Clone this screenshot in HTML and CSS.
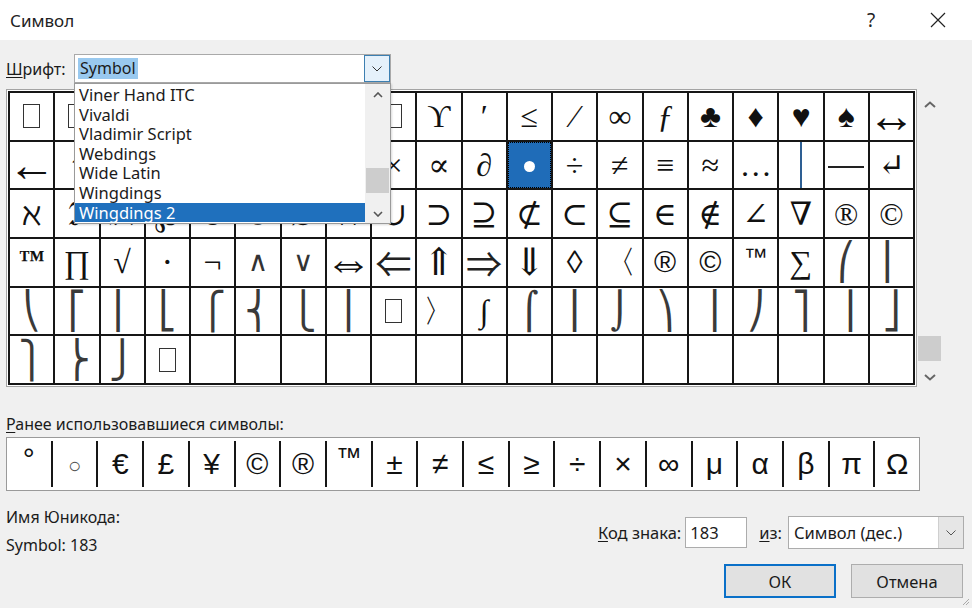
FILE: index.html
```html
<!DOCTYPE html>
<html lang="ru">
<head>
<meta charset="utf-8">
<title>Символ</title>
<link rel="stylesheet" href="styles.css">
</head>
<body>
<div class="titlebar">
  <div class="title">Символ</div>
  <div class="tb-btn help">?</div>
  <div class="tb-btn close">
    <svg width="16" height="16" viewBox="0 0 16 16"><path d="M1 1 L15 15 M15 1 L1 15" stroke="#222" stroke-width="1.2" fill="none"/></svg>
  </div>
</div>

<div class="main">
  <div class="font-row">
    <div class="label"><u>Ш</u>рифт:</div>
    <div class="combo">
      <div class="combo-text"><span class="sel">Symbol</span></div>
      <div class="combo-btn">
        <svg width="10" height="6" viewBox="0 0 10 6"><path d="M0.5 0.5 L5 5 L9.5 0.5" stroke="#333" stroke-width="1" fill="none"/></svg>
      </div>
      <div class="droplist">
        <div class="items">
          <div class="item">Viner Hand ITC</div>
          <div class="item">Vivaldi</div>
          <div class="item">Vladimir Script</div>
          <div class="item">Webdings</div>
          <div class="item">Wide Latin</div>
          <div class="item">Wingdings</div>
          <div class="item active">Wingdings 2</div>
        </div>
        <div class="vscroll small">
          <svg class="arr" width="10" height="6" viewBox="0 0 10 6"><path d="M1 5 L5 1 L9 5" stroke="#555" stroke-width="1.6" fill="none"/></svg>
          <div class="track"><div class="thumb"></div></div>
          <svg class="arr" width="10" height="6" viewBox="0 0 10 6"><path d="M1 1 L5 5 L9 1" stroke="#555" stroke-width="1.6" fill="none"/></svg>
        </div>
      </div>
    </div>
  </div>

  <div class="grid-row">
    <div class="grid-frame">
      <div class="grid">
        <div class="c"><span class="nb"></span></div><div class="c"><span class="nb"></span></div><div class="c"><span class="nb"></span></div><div class="c"><span class="nb"></span></div><div class="c"><span class="nb"></span></div><div class="c"><span class="nb"></span></div><div class="c"><span class="nb"></span></div><div class="c"><span class="nb"></span></div><div class="c"><span class="nb"></span></div><div class="c">ϒ</div><div class="c">′</div><div class="c">≤</div><div class="c">⁄</div><div class="c">∞</div><div class="c it">ƒ</div><div class="c">♣</div><div class="c">♦</div><div class="c">♥</div><div class="c">♠</div><div class="c harr">↔</div>

        <div class="c harr">←</div><div class="c varr">↑</div><div class="c harr">→</div><div class="c varr">↓</div><div class="c">°</div><div class="c">±</div><div class="c">″</div><div class="c">≥</div><div class="c">×</div><div class="c">∝</div><div class="c">∂</div><div class="c selected"><span class="dot"></span></div><div class="c">÷</div><div class="c">≠</div><div class="c">≡</div><div class="c">≈</div><div class="c">…</div><div class="c"><span class="vline"></span></div><div class="c"><span class="hline"></span></div><div class="c">↵</div>

        <div class="c">ℵ</div><div class="c">ℑ</div><div class="c">ℜ</div><div class="c">℘</div><div class="c">⊗</div><div class="c">⊕</div><div class="c">∅</div><div class="c">∩</div><div class="c">∪</div><div class="c">⊃</div><div class="c">⊇</div><div class="c">⊄</div><div class="c">⊂</div><div class="c">⊆</div><div class="c">∈</div><div class="c">∉</div><div class="c">∠</div><div class="c">∇</div><div class="c">®</div><div class="c">©</div>

        <div class="c tm">™</div><div class="c">∏</div><div class="c">√</div><div class="c">⋅</div><div class="c">¬</div><div class="c thin">∧</div><div class="c thin">∨</div><div class="c harr">⇔</div><div class="c dbl">⇐</div><div class="c varr">⇑</div><div class="c dbl">⇒</div><div class="c varr">⇓</div><div class="c">◊</div><div class="c">〈</div><div class="c sans">®</div><div class="c sans">©</div><div class="c sans tm2">™</div><div class="c">∑</div><div class="c ext">⎛</div><div class="c ext">⎜</div>

        <div class="c ext">⎝</div><div class="c ext">⎡</div><div class="c ext">⎢</div><div class="c ext">⎣</div><div class="c ext">⎧</div><div class="c ext">⎨</div><div class="c ext">⎩</div><div class="c ext">⎪</div><div class="c"><span class="nb"></span></div><div class="c">〉</div><div class="c">∫</div><div class="c ext">⌠</div><div class="c ext">⎮</div><div class="c ext">⌡</div><div class="c ext">⎞</div><div class="c ext">⎟</div><div class="c ext">⎠</div><div class="c ext">⎤</div><div class="c ext">⎥</div><div class="c ext">⎦</div>

        <div class="c ext">⎫</div><div class="c ext">⎬</div><div class="c ext">⎭</div><div class="c"><span class="nb"></span></div><div class="c"></div><div class="c"></div><div class="c"></div><div class="c"></div><div class="c"></div><div class="c"></div><div class="c"></div><div class="c"></div><div class="c"></div><div class="c"></div><div class="c"></div><div class="c"></div><div class="c"></div><div class="c"></div><div class="c"></div><div class="c"></div>
      </div>
    </div>
    <div class="vscroll big">
      <svg class="arr" width="12" height="7" viewBox="0 0 12 7"><path d="M1 6 L6 1.5 L11 6" stroke="#666" stroke-width="2" fill="none"/></svg>
      <div class="track"><div class="thumb"></div></div>
      <svg class="arr" width="12" height="7" viewBox="0 0 12 7"><path d="M1 1 L6 5.5 L11 1" stroke="#666" stroke-width="2" fill="none"/></svg>
    </div>
  </div>

  <div class="recent-label"><u>Р</u>анее использовавшиеся символы:</div>
  <div class="recent">
    <div class="r sup">°</div><div class="r small">○</div><div class="r">€</div><div class="r">£</div><div class="r">¥</div><div class="r">©</div><div class="r">®</div><div class="r sup2">™</div><div class="r">±</div><div class="r">≠</div><div class="r">≤</div><div class="r">≥</div><div class="r">÷</div><div class="r">×</div><div class="r">∞</div><div class="r">μ</div><div class="r">α</div><div class="r">β</div><div class="r">π</div><div class="r">Ω</div>
  </div>

  <div class="bottom">
    <div class="info">
      <div class="info-line">Имя Юникода:</div>
      <div class="info-line second">Symbol: 183</div>
    </div>
    <div class="controls">
      <div class="code-row">
        <span class="lbl"><u>К</u>од знака:</span>
        <div class="input">183</div>
        <span class="lbl from"><u>и</u>з:</span>
        <div class="select">
          <div class="select-text">Символ (дес.)</div>
          <div class="select-btn">
            <svg width="10" height="6" viewBox="0 0 10 6"><path d="M0.5 0.5 L5 5 L9.5 0.5" stroke="#555" stroke-width="1" fill="none"/></svg>
          </div>
        </div>
      </div>
      <div class="btn-row">
        <div class="btn ok">ОК</div>
        <div class="btn">Отмена</div>
      </div>
    </div>
  </div>
</div>
<svg class="grip" width="8" height="8" viewBox="0 0 8 8"><path d="M7 1 L1 7 M7 4 L4 7" stroke="#aaa" stroke-width="1"/></svg>
</body>
</html>
```
FILE: styles.css
```css
* { box-sizing: border-box; }
html, body { margin: 0; padding: 0; }
body {
  width: 972px;
  height: 608px;
  overflow: hidden;
  background: #f0f0f0;
  font-family: "Noto Sans", "DejaVu Sans", sans-serif;
  font-size: 16px;
  color: #1b1b1b;
  position: relative;
}
u { text-decoration: underline; text-underline-offset: 2px; }

.titlebar {
  height: 40px;
  background: #ffffff;
  display: flex;
  align-items: center;
  padding-left: 10px;
  padding-right: 11px;
}
.title { flex: 1; font-size: 17px; color: #222; }
.tb-btn {
  width: 46px;
  height: 40px;
  display: flex;
  align-items: center;
  justify-content: center;
  color: #222;
}
.help { font-size: 19px; font-family: "Noto Sans", sans-serif; color: #222; margin-right: 21px; }

.main { padding: 0 8px 0 6px; }

.font-row {
  margin-top: 14px;
  height: 29px;
  display: flex;
  align-items: center;
}
.font-row .label { width: 68px; font-size: 16px; }
.combo {
  position: relative;
  width: 317px;
  height: 29px;
  background: #fff;
  border: 1px solid #a9a9a9;
  display: flex;
}
.combo-text {
  flex: 1;
  display: flex;
  align-items: center;
  padding-left: 3px;
  font-size: 16px;
}
.combo-text .sel { background: #99c9ef; padding: 0 2px; line-height: 21px; }
.combo-btn {
  width: 26px;
  border: 1px solid #3c7fb1;
  background: #e5f1fb;
  display: flex;
  align-items: center;
  justify-content: center;
}
.droplist {
  position: absolute;
  left: -1px;
  top: 28px;
  width: 317px;
  height: 141px;
  background: #fff;
  border: 1px solid #9a9a9a;
  display: flex;
  z-index: 5;
  box-shadow: 1px 1px 2px rgba(0,0,0,0.15);
}
.items { flex: 1; padding-top: 1px; }
.item {
  height: 19.6px;
  line-height: 19.6px;
  padding-left: 4px;
  font-size: 16.5px;
  color: #1b1b1b;
  white-space: nowrap;
}
.item.active { background: #1f70bd; color: #fff; }

.vscroll {
  display: flex;
  flex-direction: column;
  align-items: center;
}
.vscroll.small { width: 25px; background: #f0f0f0; padding: 8px 0 6px; }
.vscroll.small .track { flex: 1; width: 100%; position: relative; }
.vscroll.small .thumb { position: absolute; left: 1px; right: 1px; top: 70px; height: 25px; background: #cdcdcd; }

.grid-row { display: flex; margin-top: 6px; }
.grid-frame {
  width: 911px;
  height: 298px;
  border: 1px solid #a4a4a4;
  background: #fff;
  padding: 1px;
}
.grid {
  width: 100%;
  height: 100%;
  background: #161616;
  padding: 2px;
  display: grid;
  grid-template-columns: repeat(20, 1fr);
  grid-template-rows: repeat(6, 1fr);
  gap: 2px;
}
.c {
  background: #fff;
  display: flex;
  align-items: center;
  justify-content: center;
  font-family: "Liberation Serif", "DejaVu Serif", serif;
  font-size: 32px;
  color: #111;
  line-height: 1;
  overflow: hidden;
}
.c.it { font-style: italic; }
.c.harr { font-size: 48px; line-height: 46px; }
.c.varr { font-size: 38px; }
.c.dbl { font-family: "Noto Sans CJK JP", "Liberation Serif", serif; font-size: 36px; color: #222; }
.c.thin { font-family: "DejaVu Sans", sans-serif; font-size: 28px; color: #333; }
.c.tm { font-size: 26px; font-weight: bold; align-items: flex-start; padding-top: 8px; }
.c.sans { font-family: "Liberation Sans", sans-serif; font-size: 30px; }
.c.tm2 { font-size: 24px; align-items: flex-start; padding-top: 6px; }
.c.ext { font-family: "DejaVu Sans", "Liberation Serif", serif; font-size: 36px; color: #3a3a3a; }
.nb {
  display: block;
  width: 17px;
  height: 24px;
  border: 1.5px solid #333;
}
.c.selected {
  background: #1f6cb8;
  outline: 1px dotted #000;
  outline-offset: -1px;
}
.dot { width: 11px; height: 11px; border-radius: 50%; background: #fff; margin-top: 4px; }
.vline { width: 2px; height: 46px; background: #2e5f93; }
.hline { width: 36px; height: 1.5px; background: #222; margin-top: 4px; }

.vscroll.big { width: 24px; margin-left: 1px; padding: 12px 0 6px; }
.vscroll.big .track { flex: 1; width: 100%; position: relative; }
.vscroll.big .thumb { position: absolute; left: 0; right: 1px; bottom: 13px; height: 25px; background: #cdcdcd; }

.recent-label { margin-top: 27px; line-height: 20px; font-size: 16px; }
.recent {
  margin-top: 3px;
  width: 914px;
  height: 54px;
  background: #fff;
  border: 1px solid #9a9a9a;
  display: flex;
  padding: 3px 0;
}
.r {
  flex: 1;
  display: flex;
  align-items: center;
  justify-content: center;
  font-family: "Liberation Sans", "DejaVu Sans", sans-serif;
  font-size: 30px;
  color: #111;
  border-left: 2px solid #161616;
  line-height: 1;
}
.r:first-child { border-left: none; }
.r.sup { align-items: flex-start; font-size: 30px; padding-top: 3px; }
.r.small { font-size: 22px; color: #555; padding-top: 4px; }
.r.sup2 { align-items: flex-start; font-size: 26px; padding-top: 3px; }

.bottom { display: flex; justify-content: space-between; }
.info { margin-top: 16px; }
.info-line { line-height: 20px; font-size: 16px; }
.info-line.second { margin-top: 8px; }
.controls {
  margin-top: 25px;
  display: flex;
  flex-direction: column;
  align-items: flex-end;
}
.code-row { display: flex; align-items: center; height: 33px; }
.lbl { font-size: 16.5px; }
.input {
  margin-left: 4px;
  width: 62px;
  height: 31px;
  background: #fff;
  border: 1px solid #acacac;
  font-size: 16.5px;
  padding-left: 4px;
  line-height: 29px;
}
.lbl.from { margin-left: 12px; }
.select {
  margin-left: 6px;
  width: 176px;
  height: 33px;
  background: #fff;
  border: 1px solid #acacac;
  display: flex;
}
.select-text { flex: 1; font-size: 16.5px; padding-left: 5px; line-height: 31px; white-space: nowrap; }
.select-btn {
  width: 25px;
  background: #e6e6e6;
  border-left: 1px solid #cfcfcf;
  display: flex;
  align-items: center;
  justify-content: center;
}
.btn-row { display: flex; gap: 15px; margin-top: 15px; margin-right: 1px; }
.btn {
  width: 112px;
  height: 34px;
  background: #e1e1e1;
  border: 1px solid #adadad;
  display: flex;
  align-items: center;
  justify-content: center;
  font-size: 16.5px;
}
.btn.ok { border: 2px solid #0a70c8; }

.grip { position: absolute; right: 2px; bottom: 2px; }
```
